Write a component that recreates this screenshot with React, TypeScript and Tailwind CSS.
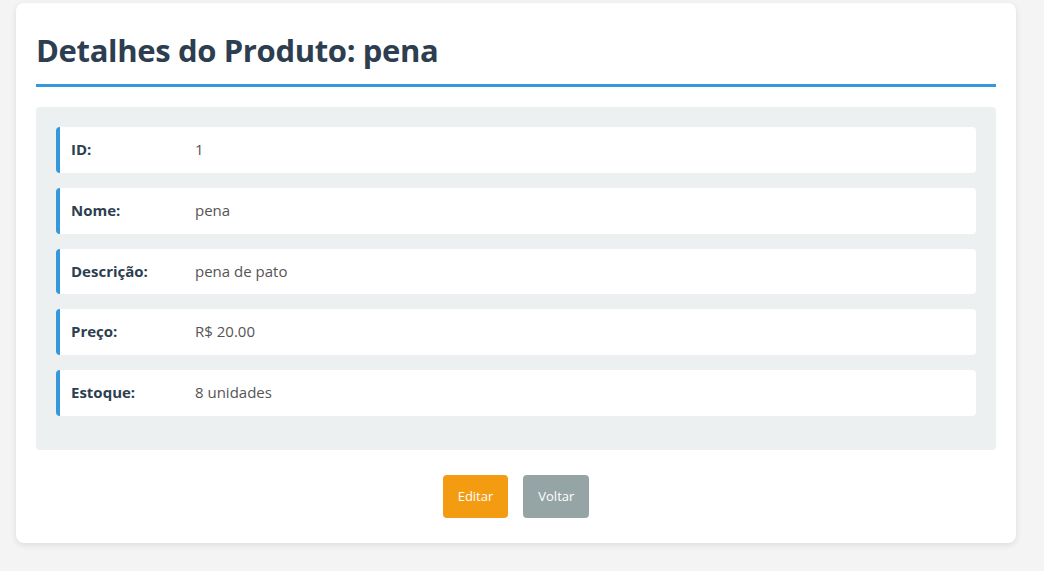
import React from 'react';

const fields = [
  { label: 'ID:', value: '1' },
  { label: 'Nome:', value: 'pena' },
  { label: 'Descrição:', value: 'pena de pato' },
  { label: 'Preço:', value: 'R$ 20.00' },
  { label: 'Estoque:', value: '8 unidades' },
];

export default function App() {
  return (
    <div className="min-h-[571px] bg-[#f4f4f4] pt-[3px] pl-4 font-['Open_Sans',sans-serif]">
      <div className="w-[1000px] rounded-lg bg-white px-5 pt-5 pb-[25px] shadow-[0_2px_6px_rgba(0,0,0,0.1)]">
        <h1 className="border-b-[3px] border-[#3498db] pt-[3px] pb-[10px] text-[31px] leading-[48px] font-bold tracking-[-0.35px] text-[#2c3e50]">
          Detalhes do Produto: pena
        </h1>

        <div className="mt-[20px] rounded bg-[#ecf0f1] px-5 pt-5 pb-[19px]">
          {fields.map((f) => (
            <div
              key={f.label}
              className="mb-[15px] flex items-center rounded border-l-4 border-[#3498db] bg-white py-3 pl-[11px] text-[15px] leading-[21.75px]"
            >
              <span className="w-[124px] font-bold text-[#2c3e50]">{f.label}</span>
              <span className="text-[#555]">{f.value}</span>
            </div>
          ))}
        </div>

        <div className="mt-[25px] flex justify-center gap-[15px]">
          <button className="rounded bg-[#f39c12] px-[15px] py-[11px] text-[13px] leading-[21px] text-white">
            Editar
          </button>
          <button className="rounded bg-[#95a5a6] px-[15px] py-[11px] text-[13px] leading-[21px] text-white">
            Voltar
          </button>
        </div>
      </div>
    </div>
  );
}
